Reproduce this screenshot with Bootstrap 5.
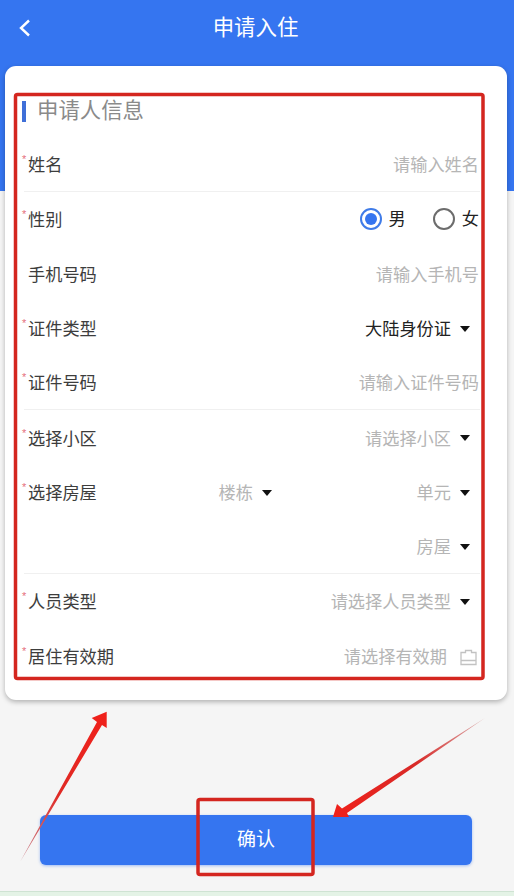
<!DOCTYPE html>
<html lang="zh">
<head>
<meta charset="utf-8">
<title>申请入住</title>
<link rel="stylesheet" href="https://cdn.jsdelivr.net/npm/bootstrap@5.3.0/dist/css/bootstrap.min.css">
<style>
html,body{height:896px;overflow:hidden}
body{position:relative;background:#f5f5f5;font-family:"Liberation Sans","Noto Sans CJK SC",sans-serif;color:#333;font-size:17.2px}
.hero{height:191px;background:#3575f0;color:#fff}
.topbar{height:56px;padding-left:18px}
.topbar h1{font-size:21.4px;font-weight:400;margin:0;flex:1;text-align:center;padding-right:35px;line-height:56px}
.sheet{margin:-125px 7px 0 5px;height:634px;border:0;border-radius:11px;background:#fff;box-shadow:0 2px 5px rgba(0,0,0,.28);padding:27px 27px 0 19px}
.sec-title{height:44.4px;font-size:21.4px;color:#8a8a8a;line-height:36px;padding-left:13px;position:relative}
.sec-title::before{content:"";position:absolute;left:-2px;top:8px;width:4px;height:21px;background:#3f6fd8}
.frow{height:54.6px;padding:3px 1px 0 4px;position:relative;line-height:1}
.frow.ruled{border-bottom:1px solid #f0f0f0}
.lab{flex:0 0 100px;position:relative;color:#3d3d3d}
.req::before{content:"*";position:absolute;left:-6px;top:-3px;font-size:11px;color:#e5707c;line-height:1}
.hint{color:#b5b5b5}
.val{color:#222}
.tri{display:inline-block;width:0;height:0;border-left:5.5px solid transparent;border-right:5.5px solid transparent;border-top:6px solid #111;margin:0 9px 0 9px;vertical-align:.2em}
.col-a{flex:0 0 153px}
.opt{display:inline-flex;align-items:center;color:#222;margin-top:-3px}
.opt-gap{margin-right:27px}
.dot{width:22px;height:22px;border-radius:50%;border:2px solid #6c6c6c;display:inline-block;margin-right:7px;position:relative}
.dot.on{border-color:#3f7be8}
.dot.on::after{content:"";position:absolute;left:3px;top:3px;width:12px;height:12px;border-radius:50%;background:#3575f0}
.go{width:432px;height:50px;margin:115px 0 0 40px;background:#3575f0;border:0;border-radius:6px;color:#fff;font-size:19px;box-shadow:0 1px 3px rgba(53,117,240,.45)}
.strip{height:5px;margin-top:26px;background:#e4f3e6;border-top:1px solid #cfe3d3}
.marks{position:absolute;left:0;top:0;pointer-events:none}
.cal{margin:0 2px 0 13px}
</style>
</head>
<body>
<div class="hero">
  <div class="topbar d-flex align-items-center">
    <svg width="14" height="18" viewBox="0 0 14 18" fill="none" stroke="#fff" stroke-width="2.4"><path d="M11 1.5 3 9l8 7.5"/></svg>
    <h1>申请入住</h1>
  </div>
</div>
<div class="card sheet">
  <div class="sec-title">申请人信息</div>
  <div class="frow ruled d-flex align-items-center justify-content-between">
    <span class="lab req">姓名</span><span class="hint">请输入姓名</span>
  </div>
  <div class="frow d-flex align-items-center justify-content-between">
    <span class="lab req">性别</span>
    <span class="d-flex">
      <span class="opt opt-gap"><i class="dot on"></i>男</span>
      <span class="opt"><i class="dot"></i>女</span>
    </span>
  </div>
  <div class="frow d-flex align-items-center justify-content-between">
    <span class="lab">手机号码</span><span class="hint">请输入手机号</span>
  </div>
  <div class="frow d-flex align-items-center justify-content-between">
    <span class="lab req">证件类型</span><span class="val">大陆身份证<i class="tri"></i></span>
  </div>
  <div class="frow ruled d-flex align-items-center justify-content-between">
    <span class="lab req">证件号码</span><span class="hint">请输入证件号码</span>
  </div>
  <div class="frow d-flex align-items-center justify-content-between">
    <span class="lab req">选择小区</span><span class="hint">请选择小区<i class="tri"></i></span>
  </div>
  <div class="frow d-flex align-items-center">
    <span class="lab req">选择房屋</span>
    <span class="hint col-a text-end">楼栋<i class="tri"></i></span>
    <span class="hint flex-fill text-end">单元<i class="tri"></i></span>
  </div>
  <div class="frow ruled d-flex align-items-center justify-content-end">
    <span class="hint">房屋<i class="tri"></i></span>
  </div>
  <div class="frow d-flex align-items-center justify-content-between">
    <span class="lab req">人员类型</span><span class="hint">请选择人员类型<i class="tri"></i></span>
  </div>
  <div class="frow d-flex align-items-center justify-content-between">
    <span class="lab req">居住有效期</span>
    <span class="hint d-flex align-items-center">请选择有效期
      <svg class="cal" width="17" height="17" viewBox="0 0 17 17" fill="none" stroke="#c2c2c2" stroke-width="1.3"><path d="M1 3.5h4.5V1.5h6v2H16V15.5H1zM1 11.5h15"/></svg>
    </span>
  </div>
</div>
<button type="button" class="btn go d-block">确认</button>
<div class="strip"></div>
<svg class="marks" width="514" height="896" viewBox="0 0 514 896">
  <defs>
    <linearGradient id="fadeA" gradientUnits="userSpaceOnUse" x1="106" y1="712" x2="20" y2="862">
      <stop offset="0" stop-color="#f0201a"/><stop offset=".55" stop-color="#e02a25"/><stop offset="1" stop-color="#c98a95"/>
    </linearGradient>
    <linearGradient id="fadeB" gradientUnits="userSpaceOnUse" x1="333" y1="817" x2="485" y2="718">
      <stop offset="0" stop-color="#f0201a"/><stop offset=".55" stop-color="#d82a28"/><stop offset="1" stop-color="#dbb2b2"/>
    </linearGradient>
  </defs>
  <rect x="15.5" y="94.5" width="467.5" height="584" rx="2" fill="none" stroke="#d4261f" stroke-width="3.5"/>
  <rect x="198" y="799.5" width="115" height="75" rx="2" fill="none" stroke="#d4261f" stroke-width="3.5"/>
  <path d="M106.7 711.7 106.7 728 102 725 20 862 97 722 91.7 718Z" fill="url(#fadeA)"/>
  <path d="M333 817 337 804 342 808.5 485 718 347 813 349 817Z" fill="url(#fadeB)"/>
</svg>
</body>
</html>
